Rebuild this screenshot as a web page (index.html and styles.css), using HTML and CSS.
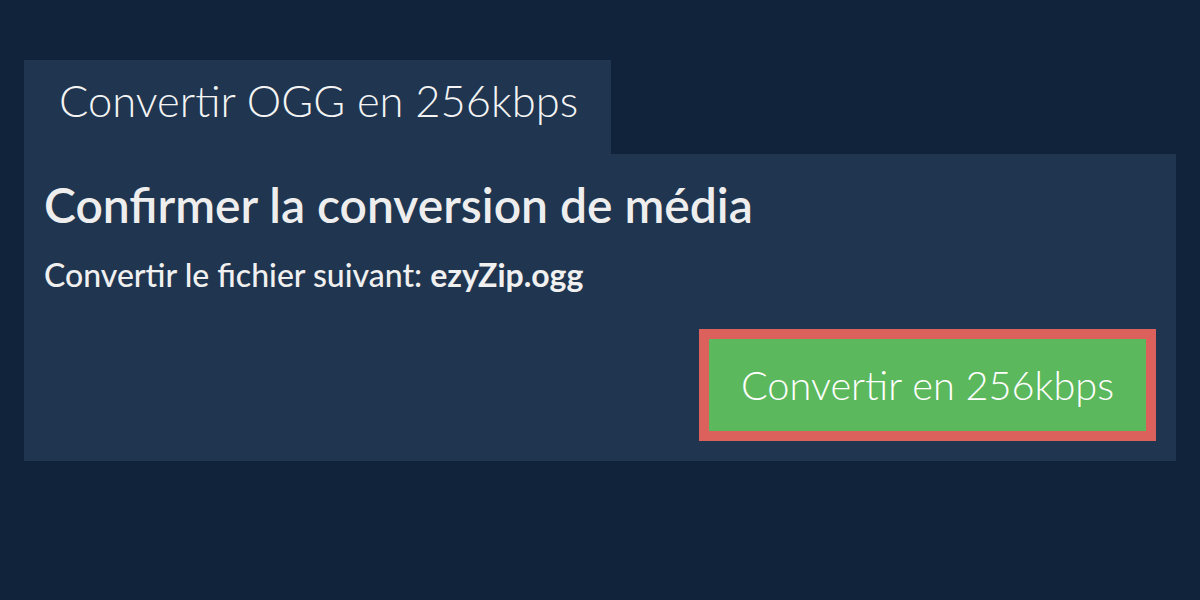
FILE: index.html
```html
<!DOCTYPE html>
<html lang="fr">
<head>
<meta charset="utf-8">
<title>Convertir OGG en 256kbps</title>
<link rel="stylesheet" href="styles.css">
</head>
<body>
<div class="page">
  <div class="tab">Convertir OGG en 256kbps</div>
  <div class="panel">
    <h1 class="title">Confirmer la conversion de média</h1>
    <p class="file">Convertir le fichier suivant: <strong>ezyZip.ogg</strong></p>
    <div class="actions">
      <button class="convert">Convertir en 256kbps</button>
    </div>
  </div>
</div>
</body>
</html>
```
FILE: styles.css
```css
html, body {
  margin: 0;
  padding: 0;
  background: #10233a;
}
body {
  font-family: Lato, "Open Sans", sans-serif;
  color: #f0f0f0;
}
.page {
  padding: 60px 24px 0 24px;
}
.tab {
  display: inline-block;
  height: 94px;
  padding: 14px 0 0 35px;
  box-sizing: border-box;
  width: 587px;
  background: #20354f;
  font-size: 43.5px;
  line-height: 1.2;
  font-weight: 300;
  color: #f4f4f4;
  white-space: nowrap;
  vertical-align: top;
}
.panel {
  background: #20354f;
  padding: 22px 20px 20px 20px;
}
.title {
  margin: 0;
  font-size: 48px;
  font-weight: 600;
  line-height: 1.2;
  color: #eeeeee;
}
.file {
  margin: 22px 0 0 0;
  font-size: 32px;
  font-weight: 500;
  line-height: 1.2;
  color: #f0f0f0;
}
.file strong {
  font-weight: 700;
}
.actions {
  display: flex;
  justify-content: flex-end;
  margin-top: 35px;
}
.convert {
  font-family: Lato, "Open Sans", sans-serif;
  font-size: 39.7px;
  font-weight: 300;
  color: #ffffff;
  background: #5cb85c;
  border: 10px solid #dc605c;
  width: 457px;
  height: 112px;
  padding: 0;
  box-sizing: border-box;
  cursor: pointer;
}
```
